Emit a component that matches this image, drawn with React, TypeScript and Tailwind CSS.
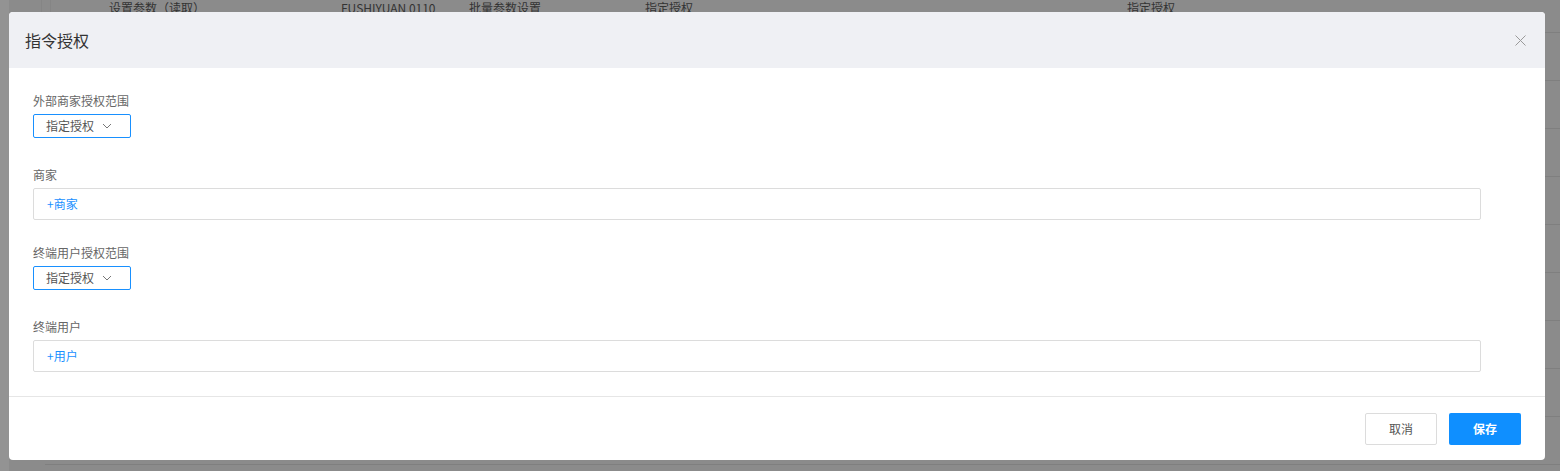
import { ReactNode } from "react";

const font = { fontFamily: '"Noto Sans CJK SC", "Liberation Sans", sans-serif' };

function Chevron() {
  return (
    <svg width="10" height="10" viewBox="0 0 10 10" className="text-[#777]">
      <path d="M1 3l4 4 4-4" fill="none" stroke="currentColor" strokeWidth="1" />
    </svg>
  );
}

function Field({ label, children }: { label: string; children: ReactNode }) {
  return (
    <div>
      <div className="mb-1 h-[18px] text-[12px] leading-[18px] text-[#666]">{label}</div>
      {children}
    </div>
  );
}

function Scope() {
  return (
    <div className="mb-7 flex h-6 w-[98px] items-center justify-between rounded-[2px] border border-[#1890ff] pl-3 pr-[18px] text-[12px] text-[#555]">
      <span>指定授权</span>
      <Chevron />
    </div>
  );
}

function Picker({ text }: { text: string }) {
  return (
    <div className="mb-6 flex h-8 w-[1448px] items-center rounded-[2px] border border-[#dcdcdc] pl-[13px] text-[12px] text-[#1890ff]">
      {text}
    </div>
  );
}

// Background rows — the list page dimmed under the mask
const cols = [
  { x: "w-[109px]", t: "" },
  { x: "w-[232px]", t: "设置参数（读取）" },
  { x: "w-[128px]", t: "FUSHIYUAN 0110" },
  { x: "w-[176px]", t: "批量参数设置" },
  { x: "w-[482px]", t: "指定授权" },
  { x: "w-[200px]", t: "指定授权" },
];

export default function App() {
  return (
    <div className="relative h-[471px] w-[1560px] overflow-hidden bg-[#8b8b8b]" style={font}>
      {/* dimmed page behind */}
      <div className="absolute inset-0">
        <div className="absolute left-0 top-0 h-full w-[9px] bg-[#939393]" />
        <div className="absolute left-[41px] top-0 h-[32px] w-px bg-[#858585]" />
        <div className="absolute left-[50px] top-0 h-[32px] w-px bg-[#858585]" />
        <div className="absolute left-0 top-[-8px] flex h-[32px] items-center text-[12px] text-[#333]">
          {cols.map((c, i) => (
            <div key={i} className={`${c.x} shrink-0`}>
              {c.t}
            </div>
          ))}
        </div>
        {[32, 80, 128, 176, 224, 272, 320, 368, 416, 464].map((y) => (
          <div key={y} className="absolute left-[45px] h-px w-full bg-[#7f7f7f]" style={{ top: y }} />
        ))}
      </div>

      {/* modal */}
      <div className="absolute left-[9px] top-[12px] flex w-[1536px] flex-col overflow-hidden rounded-[4px] bg-white">
        <div className="flex h-14 items-center justify-between bg-[#eff0f4] pl-4 pr-[19px]">
          <span className="text-[16px] text-[#333]">指令授权</span>
          <svg width="11" height="11" viewBox="0 0 11 11" className="text-[#999]">
            <path d="M0.5 0.5l10 10M10.5 0.5l-10 10" stroke="currentColor" strokeWidth="1" />
          </svg>
        </div>

        <div className="px-6 pt-6">
          <Field label="外部商家授权范围">
            <Scope />
          </Field>
          <Field label="商家">
            <Picker text="+商家" />
          </Field>
          <Field label="终端用户授权范围">
            <Scope />
          </Field>
          <Field label="终端用户">
            <Picker text="+用户" />
          </Field>
        </div>

        <div className="flex h-16 items-center justify-end gap-3 border-t border-[#e6e6e6] pr-6 pt-px">
          <button className="h-8 w-[72px] rounded-[2px] border border-[#dcdcdc] bg-white text-[12px] text-[#555]">
            取消
          </button>
          <button className="h-8 w-[72px] rounded-[2px] bg-[#0f8fff] text-[12px] font-bold text-white">
            保存
          </button>
        </div>
      </div>
    </div>
  );
}
